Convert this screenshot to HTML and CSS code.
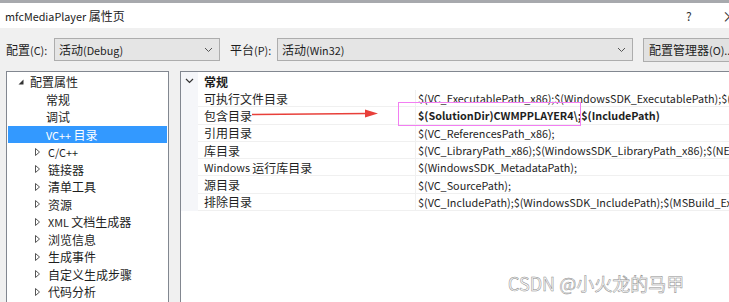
FILE: index.html
```html
<!DOCTYPE html>
<html>
<head>
<meta charset="utf-8">
<link rel="stylesheet" href="styles.css">
</head>
<body>
<div class="top-strip"></div>
<div class="titlebar">
  <span class="title"><span class="lat">mfcMediaPlayer</span> 属性页</span>
  <span class="help">?</span>
  <span class="close">×</span>
</div>
<div class="toolbar">
  <span class="lbl">配置<span class="lat">(C):</span></span>
  <div class="combo combo-config"><span>活动<span class="lat">(Debug)</span></span><svg class="chev" width="9" height="6" viewBox="0 0 9 6"><path d="M1 1 L4.5 4.5 L8 1" fill="none" stroke="#555" stroke-width="1"/></svg></div>
  <span class="lbl lbl-plat">平台<span class="lat">(P):</span></span>
  <div class="combo combo-plat"><span>活动<span class="lat">(Win32)</span></span><svg class="chev" width="9" height="6" viewBox="0 0 9 6"><path d="M1 1 L4.5 4.5 L8 1" fill="none" stroke="#555" stroke-width="1"/></svg></div>
  <div class="btn">配置管理器<span class="lat">(O)...</span></div>
</div>
<div class="main">
  <div class="tree">
    <div class="node root"><svg class="tri" width="6" height="6" viewBox="0 0 6 6"><path d="M5.5 0.5 L5.5 5.5 L0.5 5.5 Z" fill="#333"/></svg><span>配置属性</span></div>
    <div class="node leaf"><span>常规</span></div>
    <div class="node leaf"><span>调试</span></div>
    <div class="node leaf sel"><span><span class="lat">VC++ </span>目录</span></div>
    <div class="node"><svg class="tri2" width="5" height="8" viewBox="0 0 5 8"><path d="M0.5 0.5 L4.5 4 L0.5 7.5 Z" fill="none" stroke="#555" stroke-width="1"/></svg><span class="lat">C/C++</span></div>
    <div class="node"><svg class="tri2" width="5" height="8" viewBox="0 0 5 8"><path d="M0.5 0.5 L4.5 4 L0.5 7.5 Z" fill="none" stroke="#555" stroke-width="1"/></svg><span>链接器</span></div>
    <div class="node"><svg class="tri2" width="5" height="8" viewBox="0 0 5 8"><path d="M0.5 0.5 L4.5 4 L0.5 7.5 Z" fill="none" stroke="#555" stroke-width="1"/></svg><span>清单工具</span></div>
    <div class="node"><svg class="tri2" width="5" height="8" viewBox="0 0 5 8"><path d="M0.5 0.5 L4.5 4 L0.5 7.5 Z" fill="none" stroke="#555" stroke-width="1"/></svg><span>资源</span></div>
    <div class="node"><svg class="tri2" width="5" height="8" viewBox="0 0 5 8"><path d="M0.5 0.5 L4.5 4 L0.5 7.5 Z" fill="none" stroke="#555" stroke-width="1"/></svg><span><span class="lat">XML </span>文档生成器</span></div>
    <div class="node"><svg class="tri2" width="5" height="8" viewBox="0 0 5 8"><path d="M0.5 0.5 L4.5 4 L0.5 7.5 Z" fill="none" stroke="#555" stroke-width="1"/></svg><span>浏览信息</span></div>
    <div class="node"><svg class="tri2" width="5" height="8" viewBox="0 0 5 8"><path d="M0.5 0.5 L4.5 4 L0.5 7.5 Z" fill="none" stroke="#555" stroke-width="1"/></svg><span>生成事件</span></div>
    <div class="node"><svg class="tri2" width="5" height="8" viewBox="0 0 5 8"><path d="M0.5 0.5 L4.5 4 L0.5 7.5 Z" fill="none" stroke="#555" stroke-width="1"/></svg><span>自定义生成步骤</span></div>
    <div class="node"><svg class="tri2" width="5" height="8" viewBox="0 0 5 8"><path d="M0.5 0.5 L4.5 4 L0.5 7.5 Z" fill="none" stroke="#555" stroke-width="1"/></svg><span>代码分析</span></div>
  </div>
  <div class="grid">
    <div class="cat"><div class="gut"><svg width="9" height="6" viewBox="0 0 9 6"><path d="M1 1 L4.5 4.5 L8 1" fill="none" stroke="#333" stroke-width="1.2"/></svg></div><span class="catname">常规</span></div>
    <div class="row"><div class="gut"></div><div class="name">可执行文件目录</div><div class="val">$(VC_ExecutablePath_x86);$(WindowsSDK_ExecutablePath);$(VS_ExecutablePath)</div></div>
    <div class="row"><div class="gut"></div><div class="name">包含目录</div><div class="val bold">$(SolutionDir)CWMPPLAYER4\;$(IncludePath)</div></div>
    <div class="row"><div class="gut"></div><div class="name">引用目录</div><div class="val">$(VC_ReferencesPath_x86);</div></div>
    <div class="row"><div class="gut"></div><div class="name">库目录</div><div class="val">$(VC_LibraryPath_x86);$(WindowsSDK_LibraryPath_x86);$(NETFXKitsDir)Lib\um\x86</div></div>
    <div class="row"><div class="gut"></div><div class="name"><span class="lat">Windows&nbsp;</span>运行库目录</div><div class="val">$(WindowsSDK_MetadataPath);</div></div>
    <div class="row"><div class="gut"></div><div class="name">源目录</div><div class="val">$(VC_SourcePath);</div></div>
    <div class="row"><div class="gut"></div><div class="name">排除目录</div><div class="val">$(VC_IncludePath);$(WindowsSDK_IncludePath);$(MSBuild_ExecutablePath)</div></div>
    <div class="arrow"><svg width="130" height="10" viewBox="0 0 130 10"><path d="M0 5.5 L116 4.5" stroke="#e8403a" stroke-width="1.5" fill="none"/><path d="M113 0.5 L126 4.5 L113 8.5 Z" fill="#e8403a"/></svg></div>
    <div class="mark"></div>
  </div>
</div>
<div class="watermark">CSDN @小火龙的马甲</div>
</body>
</html>
```
FILE: styles.css
```css
* { box-sizing: border-box; }
html, body { margin: 0; padding: 0; }
body {
  width: 729px;
  height: 302px;
  overflow: hidden;
  background: #f0f0f0;
  font-family: "Noto Sans CJK SC", "Noto Sans", sans-serif;
  font-size: 12px;
  color: #1e1e1e;
  position: relative;
}
.lat { font-size: 10.8px; }
.top-strip { height: 3px; background: #a7a9ad; }
.titlebar {
  height: 25px;
  background: #fff;
  display: flex;
  align-items: center;
  padding-left: 5px;
  position: relative;
}
.title { font-size: 12px; color: #222; }
.help { position: absolute; left: 686px; top: 4px; font-size: 12px; color: #333; }
.close { position: absolute; left: 722px; top: 2px; font-size: 15px; color: #333; }
.toolbar {
  height: 43px;
  display: flex;
  align-items: center;
  padding: 0 0 0 6px;
}
.lbl { width: 48px; flex-shrink: 0; color: #1e1e1e; }
.lbl-plat { margin-left: 10px; width: 47px; }
.combo {
  flex-shrink: 0;
  height: 23px;
  border: 1px solid #adadad;
  background: #e5e5e5;
  display: flex;
  align-items: center;
  justify-content: space-between;
  padding: 0 6px 0 4px;
}
.combo-config { width: 166px; }
.combo-plat { width: 356px; }
.chev { display: block; }
.btn {
  flex-shrink: 0;
  margin-left: 10px;
  height: 24px;
  width: 100px;
  border: 1px solid #adadad;
  background: #e1e1e1;
  display: flex;
  align-items: center;
  padding-left: 5px;
  white-space: nowrap;
}
.main {
  display: flex;
  padding-left: 6px;
  height: 234px;
}
.tree {
  flex: 0 0 163px;
  width: 163px;
  border: 1px solid #828790;
  border-bottom: none;
  background: #fff;
  padding: 1px 1px 0 1px;
}
.node {
  height: 17.5px;
  display: flex;
  align-items: center;
  padding-left: 26px;
  white-space: nowrap;
}
.node.root { padding-left: 10px; }
.node.root .tri { margin-right: 6px; }
.node.leaf { padding-left: 38px; }
.node .tri2 { margin-right: 8px; margin-left: 1px; }
.node.sel { background: #3399ff; color: #fff; }
.grid {
  margin-left: 11px;
  flex: 1 1 auto;
  min-width: 0;
  overflow: hidden;
  border-left: 1px solid #828790;
  border-top: 1px solid #828790;
  background: #fff;
  position: relative;
}
.cat, .row {
  display: flex;
  height: 17.3px;
  align-items: center;
}
.cat { height: 18px; }
.gut {
  width: 17px;
  flex-shrink: 0;
  align-self: stretch;
  background: #f5f6f9;
  display: flex;
  align-items: center;
  justify-content: center;
}
.catname { font-weight: bold; padding-left: 6px; }
.row .name {
  width: 218px;
  flex-shrink: 0;
  padding-left: 6px;
  align-self: stretch;
  display: flex;
  align-items: center;
  border-bottom: 1px solid #f0f0f0;
  border-right: 1px solid #f0f0f0;
  white-space: nowrap;
}
.row .val {
  flex: 1 1 auto;
  min-width: 0;
  align-self: stretch;
  display: flex;
  align-items: center;
  padding-left: 2px;
  border-bottom: 1px solid #f0f0f0;
  white-space: nowrap;
  overflow: hidden;
  font-size: 10.8px;
}
.val.bold { font-weight: bold; }
.arrow { position: absolute; left: 71px; top: 37px; line-height: 0; }
.mark {
  position: absolute;
  left: 217px;
  top: 30px;
  width: 183px;
  height: 24px;
  border: 1px solid #f27ef2;
}
.watermark {
  position: absolute;
  left: 508px;
  top: 270px;
  font-size: 18px;
  color: #fdfdfd;
  -webkit-text-stroke: 0.5px #8c8c8c;
}
```
